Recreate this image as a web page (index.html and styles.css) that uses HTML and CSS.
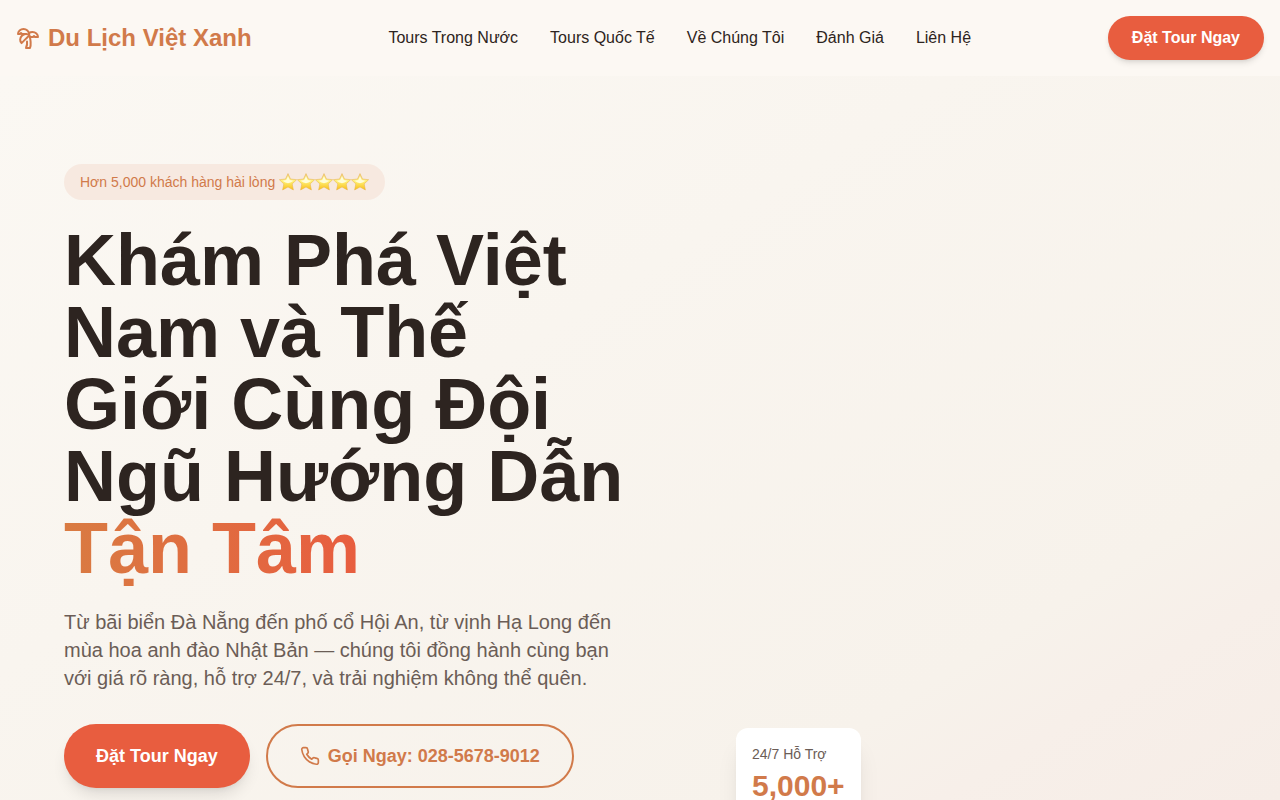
FILE: index.html
```html
<!DOCTYPE html>
<html lang="vi">
<head>
<meta charset="utf-8">
<meta name="viewport" content="width=device-width, initial-scale=1">
<title>Du Lịch Việt Xanh</title>
<link rel="stylesheet" href="styles.css">
</head>
<body>
<svg class="defs" aria-hidden="true">
  <defs>
    <linearGradient id="gold" x1="0" y1="0" x2="0" y2="1">
      <stop offset="0" stop-color="#f3cf7a"/>
      <stop offset="0.45" stop-color="#fff27a"/>
      <stop offset="1" stop-color="#f9bd18"/>
    </linearGradient>
    <symbol id="star" viewBox="0 0 18 18">
      <path d="M9 .6 11.5 6 17.6 6.7 13.2 10.9 14.4 17 9 14 3.6 17 4.8 10.9.4 6.7 6.5 6Z" fill="url(#gold)" stroke="#e6b04a" stroke-width="0.5" stroke-linejoin="round"/>
      <path d="M9 3 10.8 7 14.5 7.8 11.5 9.6 9 10.2 6.5 9.6 3.5 7.8 7.2 7Z" fill="#fffdd8"/>
    </symbol>
  </defs>
</svg>
<header class="header">
  <a class="brand" href="#">
    <svg class="brand-icon icon" viewBox="0 0 24 24" aria-hidden="true"><path d="M13 8c0-2.76-2.46-5-5.5-5S2 5.24 2 8h2l1-1 1 1h4"/><path d="M13 7.14A5.82 5.82 0 0 1 16.5 6c3.04 0 5.5 2.24 5.5 5h-3l-1-1-1 1h-3"/><path d="M5.89 9.71c-2.15 2.15-2.3 5.47-.35 7.43l4.24-4.25.7-.7.71-.71 2.12-2.12c-1.95-1.96-5.27-1.8-7.42.35"/><path d="M11 15.5c.5 2.5-.17 4.5-1 6.5h4c2-5.5-.5-12-1-14"/></svg>
    <span>Du Lịch Việt Xanh</span>
  </a>
  <nav class="nav">
    <a href="#">Tours Trong Nước</a>
    <a href="#">Tours Quốc Tế</a>
    <a href="#">Về Chúng Tôi</a>
    <a href="#">Đánh Giá</a>
    <a href="#">Liên Hệ</a>
  </nav>
  <button class="button" type="button">Đặt Tour Ngay</button>
</header>
<main class="hero">
  <section class="intro">
    <p class="pill">Hơn 5,000 khách hàng hài lòng <span class="stars" role="img" aria-label="5 sao"><svg><use href="#star"/></svg><svg><use href="#star"/></svg><svg><use href="#star"/></svg><svg><use href="#star"/></svg><svg><use href="#star"/></svg></span></p>
    <h1 class="title">Khám Phá Việt<br>Nam và Thế<br>Giới Cùng Đội<br>Ngũ Hướng Dẫn<br><span class="accent">Tận Tâm</span></h1>
    <p class="lead">Từ bãi biển Đà Nẵng đến phố cổ Hội An, từ vịnh Hạ Long đến mùa hoa anh đào Nhật Bản — chúng tôi đồng hành cùng bạn với giá rõ ràng, hỗ trợ 24/7, và trải nghiệm không thể quên.</p>
    <div class="actions">
      <button class="button button-large" type="button">Đặt Tour Ngay</button>
      <a class="call" href="tel:02856789012">
        <svg class="call-icon icon" viewBox="0 0 24 24" aria-hidden="true"><path d="M22 16.92v3a2 2 0 0 1-2.18 2 19.79 19.79 0 0 1-8.63-3.07 19.5 19.5 0 0 1-6-6 19.79 19.79 0 0 1-3.07-8.67A2 2 0 0 1 4.11 2h3a2 2 0 0 1 2 1.72 12.84 12.84 0 0 0 .7 2.81 2 2 0 0 1-.45 2.11L8.09 9.91a16 16 0 0 0 6 6l1.27-1.27a2 2 0 0 1 2.11-.45 12.84 12.84 0 0 0 2.81.7A2 2 0 0 1 22 16.92z"/></svg>
        <span>Gọi Ngay: 028-5678-9012</span>
      </a>
    </div>
  </section>
  <aside class="support">
    <p class="support-label">24/7 Hỗ Trợ</p>
    <p class="support-value">5,000+</p>
  </aside>
</main>
</body>
</html>
```

FILE: styles.css
```css
* {
  box-sizing: border-box;
}

body {
  margin: 0;
  min-height: 100vh;
  display: flex;
  flex-direction: column;
  font-family: "Liberation Sans", Arial, sans-serif;
  font-size: 16px;
  line-height: 24px;
  color: #2d2420;
  background: #fbf8f3;
}

h1,
p {
  margin: 0;
}

a {
  color: inherit;
  text-decoration: none;
}

.defs {
  position: absolute;
  width: 0;
  height: 0;
}

.icon {
  flex: none;
  fill: none;
  stroke: currentColor;
  stroke-width: 2;
  stroke-linecap: round;
  stroke-linejoin: round;
}

.header {
  display: flex;
  align-items: center;
  justify-content: space-between;
  padding: 16px;
  background: #fcf8f3;
}

.brand {
  display: flex;
  align-items: center;
  gap: 8px;
  font-size: 24px;
  line-height: 32px;
  font-weight: 700;
  color: #d17a4a;
}

.brand-icon {
  width: 24px;
  height: 24px;
}

.nav {
  display: flex;
  gap: 32px;
}

.button {
  padding: 10px 24px;
  border: 0;
  border-radius: 999px;
  font: 700 16px/24px "Liberation Sans", Arial, sans-serif;
  color: #fff;
  background: #e85d3f;
  box-shadow: 0 4px 6px -1px rgb(0 0 0 / 10%), 0 2px 4px -2px rgb(0 0 0 / 10%);
}

.hero {
  flex: 1;
  display: grid;
  grid-template-columns: repeat(2, minmax(0, 1fr));
  gap: 32px;
  padding: 88px 64px 0;
  overflow: hidden;
  background: linear-gradient(148deg, #fbf8f3 0%, #f7f2eb 78%, #f7efe9 86%, #f6ede7 100%);
}

.intro {
  display: flex;
  flex-direction: column;
  align-items: flex-start;
  gap: 24px;
}

.pill {
  display: flex;
  align-items: center;
  gap: 4px;
  padding: 8px 16px;
  border-radius: 999px;
  font-size: 14px;
  line-height: 20px;
  color: #d17a4a;
  background: #f7e9e0;
}

.stars {
  display: flex;
}

.stars svg {
  width: 18px;
  height: 18px;
}

.title {
  font-size: 72px;
  line-height: 72px;
  font-weight: 700;
  white-space: nowrap;
}

.accent {
  color: transparent;
  background: linear-gradient(90deg, #d97b42, #e85d3f);
  background-clip: text;
  -webkit-background-clip: text;
}

.lead {
  max-width: 576px;
  font-size: 20px;
  line-height: 28px;
  color: #6b5d56;
}

.actions {
  display: flex;
  gap: 16px;
  padding-top: 8px;
  white-space: nowrap;
}

.button-large {
  padding: 18px 32px;
  font-size: 18px;
  line-height: 28px;
  box-shadow: 0 10px 15px -3px rgb(0 0 0 / 10%), 0 4px 6px -4px rgb(0 0 0 / 10%);
}

.call {
  display: flex;
  align-items: center;
  gap: 8px;
  padding: 16px 32px;
  border: 2px solid #d17a4a;
  border-radius: 999px;
  font-size: 18px;
  line-height: 28px;
  font-weight: 700;
  color: #d17a4a;
}

.call-icon {
  width: 20px;
  height: 20px;
}

.support {
  align-self: end;
  justify-self: start;
  display: grid;
  gap: 4px;
  margin: 0 0 -20px 80px;
  padding: 16px;
  border-radius: 12px;
  background: #fff;
  box-shadow: 0 20px 25px -5px rgb(0 0 0 / 10%), 0 8px 10px -6px rgb(0 0 0 / 10%);
}

.support-label {
  font-size: 14px;
  line-height: 20px;
  color: #6b5d56;
}

.support-value {
  font-size: 30px;
  line-height: 36px;
  font-weight: 700;
  color: #d17a4a;
}
```
